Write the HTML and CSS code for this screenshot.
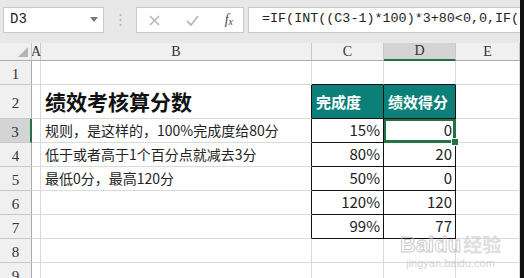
FILE: index.html
```html
<!DOCTYPE html>
<html lang="zh">
<head>
    <meta charset="UTF-8">
    <title>绩效考核算分数</title>
    <link rel="stylesheet" href="styles.css">
</head>
<body>
    <div class="app">
        <div class="main">
            <div class="bar">
                <div class="namebox">
                    <span>D3</span>
                    <svg width="8" height="5" viewBox="0 0 8 5"><path d="M0 0H8L4 5Z" fill="#7a7a7a"/></svg>
                </div>
                <div class="dots">
                    <svg width="3" height="14" viewBox="0 0 3 14"><circle cx="1.5" cy="2" r="1" fill="#b0b0b0"/><circle cx="1.5" cy="7" r="1" fill="#b0b0b0"/><circle cx="1.5" cy="12" r="1" fill="#b0b0b0"/></svg>
                </div>
                <div class="tools">
                    <svg width="11" height="11" viewBox="0 0 11 11"><path d="M1 1L10 10M10 1L1 10" stroke="#b8b8b8" stroke-width="1.6"/></svg>
                    <svg width="13" height="11" viewBox="0 0 13 11"><path d="M1 6L5 10L12 1" stroke="#b8b8b8" stroke-width="1.8" fill="none"/></svg>
                    <span class="fx">f<sub>x</sub></span>
                </div>
                <div class="formula">=IF(INT((C3-1)*100)*3+80&lt;0,0,IF(IF(INT((C3-1)*100)</div>
            </div>

            <div class="sheet">
                <div class="hd corner"><span class="tri"></span></div>
                <div class="hd">A</div>
                <div class="hd">B</div>
                <div class="hd">C</div>
                <div class="hd hd-sel">D</div>
                <div class="hd">E</div>

                <div class="rh">1</div><div class="c"></div><div class="c"></div>
                <div class="c bb"></div><div class="c bb"></div><div class="c"></div>

                <div class="rh">2</div><div class="c"></div>
                <div class="c br title">绩效考核算分数</div>
                <div class="c tb head">完成度</div>
                <div class="c tb head">绩效得分</div>
                <div class="c"></div>

                <div class="rh rh-sel">3</div><div class="c"></div>
                <div class="c br txt">规则，是这样的，100%完成度给80分</div>
                <div class="c tb num">15%</div>
                <div class="c tb num sel">0</div>
                <div class="c"></div>

                <div class="rh">4</div><div class="c"></div>
                <div class="c br txt">低于或者高于1个百分点就减去3分</div>
                <div class="c tb num">80%</div>
                <div class="c tb num">20</div>
                <div class="c"></div>

                <div class="rh">5</div><div class="c"></div>
                <div class="c br txt">最低0分，最高120分</div>
                <div class="c tb num">50%</div>
                <div class="c tb num">0</div>
                <div class="c"></div>

                <div class="rh">6</div><div class="c"></div>
                <div class="c br"></div>
                <div class="c tb num">120%</div>
                <div class="c tb num">120</div>
                <div class="c"></div>

                <div class="rh">7</div><div class="c"></div>
                <div class="c br"></div>
                <div class="c tb num">99%</div>
                <div class="c tb num">77</div>
                <div class="c"></div>

                <div class="rh">8</div><div class="c"></div><div class="c"></div>
                <div class="c"></div><div class="c"></div><div class="c"></div>

                <div class="rh">9</div><div class="c"></div><div class="c"></div>
                <div class="c"></div><div class="c"></div><div class="c"></div>

                <div class="mark">
                    <span class="mark-top">Baidu<b>经验</b></span>
                    <span class="mark-url">jingyan.baidu.com</span>
                </div>
            </div>
        </div>
        <div class="edge"></div>
    </div>
</body>
</html>
```

FILE: styles.css
```css
* {
    box-sizing: border-box;
}
body {
    margin: 0;
    background: #fff;
    font-family: "Noto Sans CJK SC", "Noto Sans", sans-serif;
}
.app {
    display: flex;
    width: 524px;
    height: 278px;
    overflow: hidden;
}
.main {
    width: 520px;
    overflow: hidden;
}
.edge {
    width: 4px;
    background: #111;
}

/* formula bar */
.bar {
    display: flex;
    align-items: flex-start;
    height: 43px;
    padding-top: 7px;
    background: #e8e8e8;
}
.namebox {
    display: flex;
    align-items: center;
    justify-content: space-between;
    width: 101px;
    height: 26px;
    margin-left: 3px;
    padding: 0 5px 2px 6px;
    background: #fff;
    border: 1px solid #c9c9c9;
    font-family: "Liberation Mono", monospace;
    font-size: 14px;
    color: #222;
}
.dots {
    display: flex;
    align-items: center;
    justify-content: center;
    width: 32px;
    height: 26px;
}
.tools {
    display: flex;
    align-items: center;
    justify-content: space-between;
    width: 108px;
    height: 26px;
    padding: 0 10px 0 12px;
    background: #fff;
    border: 1px solid #c9c9c9;
}
.fx {
    font-family: "Liberation Serif", serif;
    font-style: italic;
    font-size: 14px;
    color: #444;
    line-height: 1;
}
.fx sub {
    font-size: 10px;
    vertical-align: -1px;
}
.formula {
    flex: 1;
    height: 26px;
    margin-left: 4px;
    padding: 3px 0 0 13px;
    background: #fff;
    border: 1px solid #c9c9c9;
    border-right: 0;
    font-family: "Liberation Mono", monospace;
    font-size: 13.4px;
    color: #222;
    white-space: nowrap;
    overflow: hidden;
}

/* sheet grid */
.sheet {
    position: relative;
    display: grid;
    grid-template-columns: 32px 9px 271px 72px 72px 64px;
    grid-template-rows: 18px 24px 34px repeat(7, 24px);
    height: 235px;
    overflow: hidden;
}
.hd, .rh {
    display: flex;
    align-items: center;
    justify-content: center;
    background: #f0f0f0;
    border-right: 1px solid #c8c8c8;
    border-bottom: 1px solid #ababab;
    font-family: "Liberation Serif", serif;
    font-size: 14px;
    color: #333;
}
.rh {
    border-bottom: 1px solid #c8c8c8;
    border-right: 1px solid #ababab;
    padding-top: 4px;
    font-size: 15px;
}
.corner {
    position: relative;
}
.tri {
    position: absolute;
    right: 3px;
    bottom: 3px;
    width: 0;
    height: 0;
    border-left: 10px solid transparent;
    border-bottom: 10px solid #b5b5b5;
}
.hd-sel {
    background: #d4d4d4;
    border-bottom: 2px solid #217346;
}
.rh-sel {
    background: #d4d4d4;
    border-right: 2px solid #217346;
}
.c {
    display: flex;
    align-items: flex-end;
    padding: 0 4px 2px;
    border-right: 1px solid #dadada;
    border-bottom: 1px solid #dadada;
    font-size: 14px;
    color: #222;
    white-space: nowrap;
}
.bb {
    border-bottom-color: #111;
}
.br {
    border-right-color: #111;
}
.tb {
    border-right-color: #111;
    border-bottom-color: #111;
}
.title {
    padding-bottom: 2px;
    font-size: 21px;
    font-weight: bold;
    color: #111;
}
.txt {
    padding-left: 4px;
}
.head {
    padding: 0 3px 6px 4px;
    background: #0d7f79;
    color: #fff;
    font-size: 15px;
    font-weight: bold;
}
.num {
    justify-content: flex-end;
    padding-right: 3px;
    font-size: 15px;
}
.sel {
    position: relative;
    z-index: 1;
    box-shadow: inset 0 0 0 2px #217346;
    border-color: #217346;
}
.sel::after {
    content: "";
    position: absolute;
    right: -4px;
    bottom: -4px;
    width: 6px;
    height: 6px;
    background: #217346;
    border: 1px solid #fff;
}

/* watermark */
.mark {
    position: absolute;
    left: 400px;
    top: 190px;
    display: flex;
    flex-direction: column;
    align-items: center;
    z-index: 2;
    color: rgba(200, 200, 200, 0.7);
    pointer-events: none;
}
.mark-top {
    font-family: "Liberation Sans", sans-serif;
    font-size: 22px;
    font-weight: bold;
    line-height: 22px;
    color: transparent;
    -webkit-text-stroke: 1px rgba(185, 185, 185, 0.75);
}
.mark-top b {
    margin-left: 2px;
    font-family: "Noto Sans CJK SC", sans-serif;
    font-size: 19px;
    color: rgba(210, 210, 210, 0.7);
    -webkit-text-stroke: 0;
}
.mark-url {
    font-family: "Liberation Sans", sans-serif;
    font-size: 11px;
    line-height: 14px;
    color: rgba(200, 200, 200, 0.8);
}
```
